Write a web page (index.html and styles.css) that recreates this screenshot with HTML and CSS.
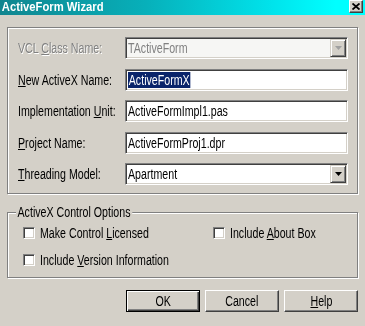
FILE: index.html
```html
<!DOCTYPE html>
<html>
<head>
<meta charset="utf-8">
<link rel="stylesheet" href="styles.css">
</head>
<body>
<div class="dialog">
  <div class="titlebar">
    <span class="title">ActiveForm Wizard</span>
    <span class="close"><svg width="8" height="7" viewBox="0 0 8 7"><path d="M0.5 0.5 L7.5 6.5 M7.5 0.5 L0.5 6.5" stroke="#000" stroke-width="1.8" fill="none"/></svg></span>
  </div>

  <div class="panel">
    <div class="row">
      <span class="lbl disabled">VCL <u>C</u>lass Name:</span>
      <div class="field combo is-disabled">
        <span class="val">TActiveForm</span>
        <span class="dd"><svg width="7" height="4" viewBox="0 0 7 4"><path d="M0 0 H7 L3.5 4 Z" fill="#a0a0a0"/></svg></span>
      </div>
    </div>
    <div class="row">
      <span class="lbl"><u>N</u>ew ActiveX Name:</span>
      <div class="field"><span class="val"><span class="sel">ActiveFormX</span></span></div>
    </div>
    <div class="row">
      <span class="lbl">Implementation <u>U</u>nit:</span>
      <div class="field"><span class="val">ActiveFormImpl1.pas</span></div>
    </div>
    <div class="row">
      <span class="lbl"><u>P</u>roject Name:</span>
      <div class="field"><span class="val">ActiveFormProj1.dpr</span></div>
    </div>
    <div class="row">
      <span class="lbl"><u>T</u>hreading Model:</span>
      <div class="field combo">
        <span class="val">Apartment</span>
        <span class="dd"><svg width="7" height="4" viewBox="0 0 7 4"><path d="M0 0 H7 L3.5 4 Z" fill="#000"/></svg></span>
      </div>
    </div>
  </div>

  <div class="group">
    <span class="legend">ActiveX Control Options</span>
    <div class="checks">
      <div class="chk"><span class="box"></span><span class="txt">Make Control <u>L</u>icensed</span></div>
      <div class="chk"><span class="box"></span><span class="txt">Include <u>A</u>bout Box</span></div>
      <div class="chk"><span class="box"></span><span class="txt">Include <u>V</u>ersion Information</span></div>
    </div>
  </div>

  <div class="buttons">
    <div class="btn default"><span class="txt">OK</span></div>
    <div class="btn"><span class="txt">Cancel</span></div>
    <div class="btn"><span class="txt"><u>H</u>elp</span></div>
  </div>
</div>
</body>
</html>
```
FILE: styles.css
```css
html, body {
  margin: 0;
  padding: 0;
  background: #d4d0c8;
}
.dialog {
  width: 365px;
  height: 326px;
  background: #d4d0c8;
  font-family: "Liberation Sans", Arial, sans-serif;
  font-size: 14px;
  color: #000;
  overflow: hidden;
}
u { text-decoration: underline; text-underline-offset: 1px; }

.titlebar {
  height: 15px;
  display: flex;
  justify-content: space-between;
  align-items: flex-start;
  background: linear-gradient(to right, #10858f 0%, #07b0ba 40%, #00e4ec 75%, #00ffff 92%);
}
.title {
  font-weight: bold;
  font-size: 12.5px;
  line-height: 14px;
  color: #fff;
  padding-left: 2px;
  transform: scaleX(0.9);
  transform-origin: left center;
  white-space: nowrap;
}
.close {
  flex: none;
  width: 14px;
  height: 13px;
  margin-right: 2px;
  box-sizing: border-box;
  background: #d4d0c8;
  border-top: 1px solid #fff;
  border-left: 1px solid #fff;
  border-right: 1px solid #404040;
  border-bottom: 1px solid #404040;
  box-shadow: inset -1px -1px #808080;
  display: flex;
  align-items: center;
  justify-content: center;
}

.panel {
  margin: 12px 7px 0 7px;
  width: 351px;
  height: 167px;
  box-sizing: border-box;
  border: 1px solid #808080;
  box-shadow: inset 1px 1px #fff, 1px 1px #fff;
  padding: 9px 9px 0 10px;
  display: flex;
  flex-direction: column;
  gap: 9.5px;
}
.row {
  height: 22px;
  display: flex;
  align-items: center;
  justify-content: space-between;
}
.lbl {
  flex: 0 1 auto;
  min-width: 0;
  white-space: nowrap;
  transform: scaleX(0.76);
  transform-origin: left center;
}
.lbl.disabled { color: #808080; text-shadow: 1px 1px #fff; }

.field {
  flex: none;
  width: 223px;
  height: 22px;
  box-sizing: border-box;
  background: #fff;
  border-top: 1px solid #808080;
  border-left: 1px solid #808080;
  border-right: 1px solid #fff;
  border-bottom: 1px solid #fff;
  box-shadow: inset 1px 1px #404040, inset -1px -1px #d4d0c8;
  display: flex;
  align-items: center;
  padding-left: 2px;
}
.field.is-disabled { background: #f6f6f4; color: #808080; }
.val {
  flex: 1;
  white-space: nowrap;
  line-height: 16px;
  transform: scaleX(0.76);
  transform-origin: left center;
}
.sel { background: #0a246a; color: #fff; padding: 0 1px; display: inline-block; line-height: 16px; }
.dd {
  flex: none;
  width: 16px;
  height: 18px;
  margin-right: 1px;
  box-sizing: border-box;
  background: #d4d0c8;
  border-top: 1px solid #d4d0c8;
  border-left: 1px solid #d4d0c8;
  border-right: 1px solid #404040;
  border-bottom: 1px solid #404040;
  box-shadow: inset 1px 1px #fff, inset -1px -1px #808080;
  display: flex;
  align-items: center;
  justify-content: center;
}

.group {
  position: relative;
  margin: 18px 7px 0 7px;
  width: 351px;
  height: 66px;
  box-sizing: border-box;
  border: 1px solid #808080;
  box-shadow: inset 1px 1px #fff, 1px 1px #fff;
  padding: 12px 0 0 15px;
}
.legend {
  position: absolute;
  top: -9px;
  left: 8px;
  padding: 0 2px;
  line-height: 16px;
  background: #d4d0c8;
  white-space: nowrap;
  transform: scaleX(0.76);
  transform-origin: left center;
}
.checks {
  display: grid;
  grid-template-columns: 190px auto;
  grid-auto-rows: 15px;
  row-gap: 12px;
}
.chk {
  display: flex;
  align-items: center;
  gap: 5px;
  white-space: nowrap;
}
.chk .txt {
  transform: scaleX(0.76);
  transform-origin: left center;
}
.box {
  flex: none;
  width: 12px;
  height: 12px;
  box-sizing: border-box;
  background: #fff;
  border-top: 1px solid #808080;
  border-left: 1px solid #808080;
  border-right: 1px solid #fff;
  border-bottom: 1px solid #fff;
  box-shadow: inset 1px 1px #404040, inset -1px -1px #d4d0c8;
}

.buttons {
  margin-top: 12px;
  padding-right: 7px;
  display: flex;
  justify-content: flex-end;
  gap: 5px;
}
.btn {
  width: 74px;
  height: 22px;
  box-sizing: border-box;
  border-top: 1px solid #fff;
  border-left: 1px solid #fff;
  border-right: 1px solid #404040;
  border-bottom: 1px solid #404040;
  box-shadow: inset -1px -1px #808080;
  display: flex;
  align-items: center;
  justify-content: center;
}
.btn .txt {
  display: inline-block;
  transform: scaleX(0.76);
}
.btn.default {
  border: 1px solid #000;
  box-shadow: inset 1px 1px #fff, inset -1px -1px #404040, inset -2px -2px #808080;
}
```
